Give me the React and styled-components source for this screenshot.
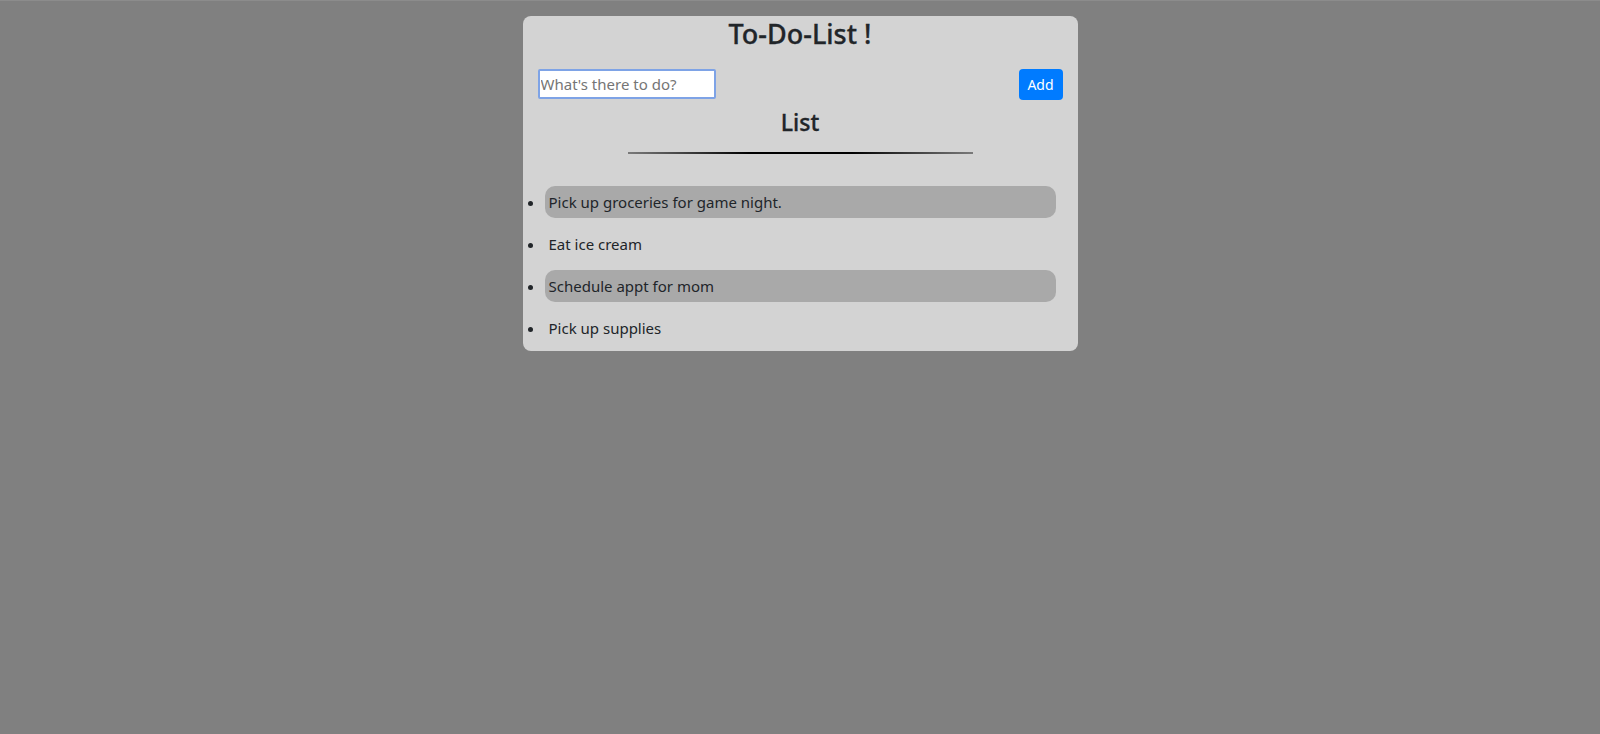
import styled, { createGlobalStyle } from "styled-components";

const GlobalStyle = createGlobalStyle`
  body {
    margin: 0;
    background-color: gray;
    font-family: "Noto Sans", "Open Sans", sans-serif;
    color: #212529;
  }
`;

const todos = [
  "Pick up groceries for game night.",
  "Eat ice cream",
  "Schedule appt for mom",
  "Pick up supplies",
];

const App = () => {
  return (
    <>
      <GlobalStyle />
      <Page>
        <Card>
          <Title>To-Do-List !</Title>
          <AddRow>
            <TodoInput type="text" placeholder="What's there to do?" />
            <AddButton>Add</AddButton>
          </AddRow>
          <ListHeading>List</ListHeading>
          <Divider />
          <TodoList>
            {todos.map((todo, i) => (
              <TodoItem key={todo} $shaded={i % 2 === 0}>
                {todo}
              </TodoItem>
            ))}
          </TodoList>
        </Card>
      </Page>
    </>
  );
};

export default App;

const Page = styled.div`
  min-height: 734px;
  padding-top: 15px;
  box-sizing: border-box;
  border-top: 1px solid #8c8c8c;
`;

const Card = styled.div`
  width: 555px;
  margin: 0 auto;
  box-sizing: border-box;
  padding: 0 15px 7px;
  border-radius: 8px;
  background-color: lightgray;
`;

const Title = styled.h3`
  margin: 0;
  padding-top: 1px;
  text-align: center;
  font-size: 27px;
  font-weight: 500;
  line-height: 33px;
  -webkit-text-stroke: 0.3px #212529;
`;

const AddRow = styled.div`
  display: flex;
  justify-content: space-between;
  align-items: flex-start;
  margin-top: 19px;
`;

const TodoInput = styled.input`
  width: 178px;
  height: 30px;
  box-sizing: border-box;
  padding: 0 1px;
  font-family: inherit;
  font-size: 15px;
  border: 2px solid #7ea3e6;
  border-radius: 2px;
  background: #fff;
  &::placeholder {
    color: #757575;
  }
  &:focus {
    outline: none;
  }
`;

const AddButton = styled.button`
  width: 44px;
  height: 31px;
  border: none;
  border-radius: 4px;
  padding: 0;
  font-family: inherit;
  font-size: 14px;
  color: #fff;
  background-color: #007bff;
  cursor: pointer;
`;

const ListHeading = styled.h4`
  margin: 8px 0 0;
  text-align: center;
  font-size: 23px;
  font-weight: 500;
  line-height: 29px;
  -webkit-text-stroke: 0.3px #212529;
`;

const Divider = styled.div`
  width: 345px;
  height: 2px;
  margin: 15px auto 0;
  background: linear-gradient(to right, #7a7a7a, #000 35%, #000 65%, #7a7a7a);
`;

const TodoList = styled.ul`
  margin: 32px 0 0;
  padding: 0 7px;
  display: flex;
  flex-direction: column;
  gap: 10px;
`;

const TodoItem = styled.li`
  height: 32px;
  line-height: 32px;
  padding-left: 4px;
  font-size: 15px;
  border-radius: 10px;
  background-color: ${({ $shaded }) => ($shaded ? "darkgray" : "transparent")};
`;
